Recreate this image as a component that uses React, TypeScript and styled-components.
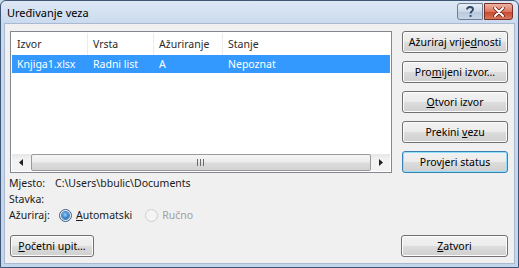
import React from "react";
import styled, { createGlobalStyle, css } from "styled-components";

const Global = createGlobalStyle`
  html, body { margin: 0; padding: 0; background: #c9d9ec; }
  body { font-family: "Noto Sans", "Open Sans", sans-serif; font-size: 10.5px; color: #000; }
  * { box-sizing: border-box; }
`;

const Window = styled.div`
  width: 519px;
  height: 268px;
  display: flex;
  flex-direction: column;
  border: 1px solid #3f5677;
  border-radius: 6px 6px 0 0;
  background: linear-gradient(#dde8f5 0px, #c9d9ee 24px, #c4d6ec 100%);
  overflow: hidden;
`;

const TitleBar = styled.div`
  height: 22px;
  flex: none;
  display: flex;
  align-items: flex-start;
  padding: 1px 5px 0 6px;
`;

const Title = styled.div`
  flex: 1;
  line-height: 22px;
  font-size: 11px;
  color: #000;
`;

const CapButton = styled.div<{ $kind: "help" | "close" }>`
  height: 17px;
  margin-top: 1px;
  border: 1px solid #6d7e95;
  display: flex;
  align-items: center;
  justify-content: center;
  ${(p) =>
    p.$kind === "help"
      ? css`
          width: 26px;
          border-radius: 3px 0 0 3px;
          background: linear-gradient(#e8eef6 0%, #cdd9e8 50%, #b8c8dc 51%, #c9d7e8 100%);
        `
      : css`
          width: 29px;
          border-radius: 0 3px 3px 0;
          margin-left: 1px;
          border-color: #7a2f24;
          background: linear-gradient(#eeb4a4 0%, #dc7660 50%, #c8452c 51%, #d8775c 100%);
        `}
`;

const Client = styled.div`
  flex: 1;
  margin: 0 3px 3px 3px;
  background: #f0f0f0;
  border: 1px solid #a9bad0;
  display: flex;
  flex-direction: column;
  padding: 7px 6px 6px 5px;
`;

const TopRow = styled.div`
  display: flex;
  gap: 10px;
`;

const LeftCol = styled.div`
  width: 382px;
  display: flex;
  flex-direction: column;
`;

const RightCol = styled.div`
  flex: 1;
  display: flex;
  flex-direction: column;
  gap: 8px;
`;

const List = styled.div`
  height: 142px;
  border: 1px solid #828790;
  background: #fff;
  padding: 1px;
  display: flex;
  flex-direction: column;
`;

const Rows = styled.div`
  flex: 1;
`;

const Row = styled.div<{ $header?: boolean; $selected?: boolean }>`
  display: grid;
  grid-template-columns: 76px 66px 69px 1fr;
  height: ${(p) => (p.$header ? "22px" : "18px")};
  align-items: center;
  color: ${(p) => (p.$selected ? "#fff" : p.$header ? "#2b2b2b" : "#000")};
  background: ${(p) => (p.$selected ? "#3399ff" : "transparent")};
`;

const Cell = styled.div<{ $header?: boolean }>`
  padding-left: 5px;
  height: 100%;
  display: flex;
  align-items: center;
  white-space: nowrap;
  overflow: hidden;
  ${(p) =>
    p.$header &&
    css`
      border-right: 1px solid #ececec;
      &:last-child { border-right: none; }
    `}
`;

const HScroll = styled.div`
  height: 17px;
  display: flex;
  align-items: stretch;
  background: linear-gradient(#e6e6e6, #f4f4f4 40%, #f2f2f2);
`;

const Arrow = styled.div`
  width: 18px;
  display: flex;
  align-items: center;
  justify-content: center;
`;

const Thumb = styled.div`
  flex: 1;
  margin: 0 1px;
  border: 1px solid #9a9a9a;
  border-radius: 2px;
  background: linear-gradient(#f6f6f6 0%, #ececec 45%, #dcdcdc 55%, #d2d2d2 100%);
  display: flex;
  align-items: center;
  justify-content: center;
`;

const Info = styled.div`
  margin-top: 2px;
  margin-left: -1px;
  display: grid;
  grid-template-columns: 46px 1fr;
  line-height: 16px;
  color: #1a1a1a;
`;

const RadioGroup = styled.div`
  display: flex;
  align-items: center;
`;

const RadioItem = styled.div<{ $disabled?: boolean }>`
  display: flex;
  align-items: center;
  gap: 4px;
  margin-right: 9px;
  color: ${(p) => (p.$disabled ? "#a0a0a0" : "inherit")};
`;

const RadioCircle = styled.span<{ $checked?: boolean; $disabled?: boolean }>`
  width: 13px;
  height: 13px;
  border-radius: 50%;
  border: 1px solid ${(p) => (p.$disabled ? "#cfcfcf" : "#3a5f86")};
  background: ${(p) =>
    p.$disabled ? "#f4f4f4" : "radial-gradient(circle at 50% 40%, #fff, #dfe5ea)"};
  display: flex;
  align-items: center;
  justify-content: center;
  margin-left: 4px;
  &::after {
    content: "";
    display: ${(p) => (p.$checked ? "block" : "none")};
    width: 7px;
    height: 7px;
    border-radius: 50%;
    background: radial-gradient(circle at 45% 40%, #9bd3ff, #2a79c6 60%, #1d4f8a);
    box-shadow: 0 0 0 1px #4a86c0;
  }
`;

const Button = styled.button<{ $default?: boolean; $width?: number }>`
  height: 22px;
  width: ${(p) => (p.$width ? `${p.$width}px` : "100%")};
  padding: 0;
  font: inherit;
  color: #000;
  border: 1px solid ${(p) => (p.$default ? "#3c7fb1" : "#707070")};
  border-radius: 3px;
  background: linear-gradient(#f2f2f2 0%, #ebebeb 49%, #dddddd 50%, #cfcfcf 100%);
  box-shadow: inset 0 0 0 1px ${(p) => (p.$default ? "#8fe0fb" : "#fcfcfc")};
  display: flex;
  align-items: center;
  justify-content: center;
  white-space: nowrap;
  u { text-decoration: underline; text-underline-offset: 1px; }
`;

const BottomRow = styled.div`
  margin-top: auto;
  display: flex;
  justify-content: space-between;
  align-items: flex-end;
`;

const Grip = () => (
  <svg width="8" height="7" viewBox="0 0 8 7">
    <rect x="0" y="0" width="1" height="7" fill="#6b6b6b" />
    <rect x="3" y="0" width="1" height="7" fill="#6b6b6b" />
    <rect x="6" y="0" width="1" height="7" fill="#6b6b6b" />
  </svg>
);

export default function App() {
  return (
    <>
      <Global />
      <Window>
        <TitleBar>
          <Title>Uređivanje veza</Title>
          <CapButton $kind="help">
            <svg width="10" height="12" viewBox="0 0 10 12">
              <path
                d="M2 3.5 C2 1.5 3.5 1 5 1 C6.8 1 8 2 8 3.4 C8 5 5.5 5.3 5.5 7.5"
                fill="none"
                stroke="#2e4566"
                strokeWidth="1.8"
              />
              <rect x="4.6" y="9" width="1.9" height="1.9" fill="#2e4566" />
            </svg>
          </CapButton>
          <CapButton $kind="close">
            <svg width="12" height="10" viewBox="0 0 12 10">
              <path d="M2 1 L10 9 M10 1 L2 9" stroke="#5a1a10" strokeWidth="3.4" strokeLinecap="round" />
              <path d="M2 1 L10 9 M10 1 L2 9" stroke="#fff" strokeWidth="2" strokeLinecap="round" />
            </svg>
          </CapButton>
        </TitleBar>
        <Client>
          <TopRow>
            <LeftCol>
              <List>
                <Rows>
                  <Row $header>
                    <Cell $header>Izvor</Cell>
                    <Cell $header>Vrsta</Cell>
                    <Cell $header>Ažuriranje</Cell>
                    <Cell $header>Stanje</Cell>
                  </Row>
                  <Row $selected>
                    <Cell>Knjiga1.xlsx</Cell>
                    <Cell>Radni list</Cell>
                    <Cell>A</Cell>
                    <Cell>Nepoznat</Cell>
                  </Row>
                </Rows>
                <HScroll>
                  <Arrow>
                    <svg width="4" height="7" viewBox="0 0 4 7">
                      <path d="M4 0 L0 3.5 L4 7 Z" fill="#222" />
                    </svg>
                  </Arrow>
                  <Thumb>
                    <Grip />
                  </Thumb>
                  <Arrow>
                    <svg width="4" height="7" viewBox="0 0 4 7">
                      <path d="M0 0 L4 3.5 L0 7 Z" fill="#222" />
                    </svg>
                  </Arrow>
                </HScroll>
              </List>
              <Info>
                <span>Mjesto:</span>
                <span>C:\Users\bbulic\Documents</span>
                <span>Stavka:</span>
                <span></span>
                <span>Ažuriraj:</span>
                <RadioGroup>
                  <RadioItem>
                    <RadioCircle $checked />
                    <span>
                      <u>A</u>utomatski
                    </span>
                  </RadioItem>
                  <RadioItem $disabled>
                    <RadioCircle $disabled />
                    <span>Ručno</span>
                  </RadioItem>
                </RadioGroup>
              </Info>
            </LeftCol>
            <RightCol>
              <Button>
                <span>
                  Ažuriraj vrije<u>d</u>nosti
                </span>
              </Button>
              <Button>
                <span>
                  Pro<u>m</u>ijeni izvor...
                </span>
              </Button>
              <Button>
                <span>
                  <u>O</u>tvori izvor
                </span>
              </Button>
              <Button>
                <span>
                  Prekini <u>v</u>ezu
                </span>
              </Button>
              <Button $default>
                <span>
                  Prov<u>j</u>eri status
                </span>
              </Button>
            </RightCol>
          </TopRow>
          <BottomRow>
            <Button $width={84}>
              <span>
                <u>P</u>očetni upit...
              </span>
            </Button>
            <Button $width={107}>
              <span>
                <u>Z</u>atvori
              </span>
            </Button>
          </BottomRow>
        </Client>
      </Window>
    </>
  );
}
